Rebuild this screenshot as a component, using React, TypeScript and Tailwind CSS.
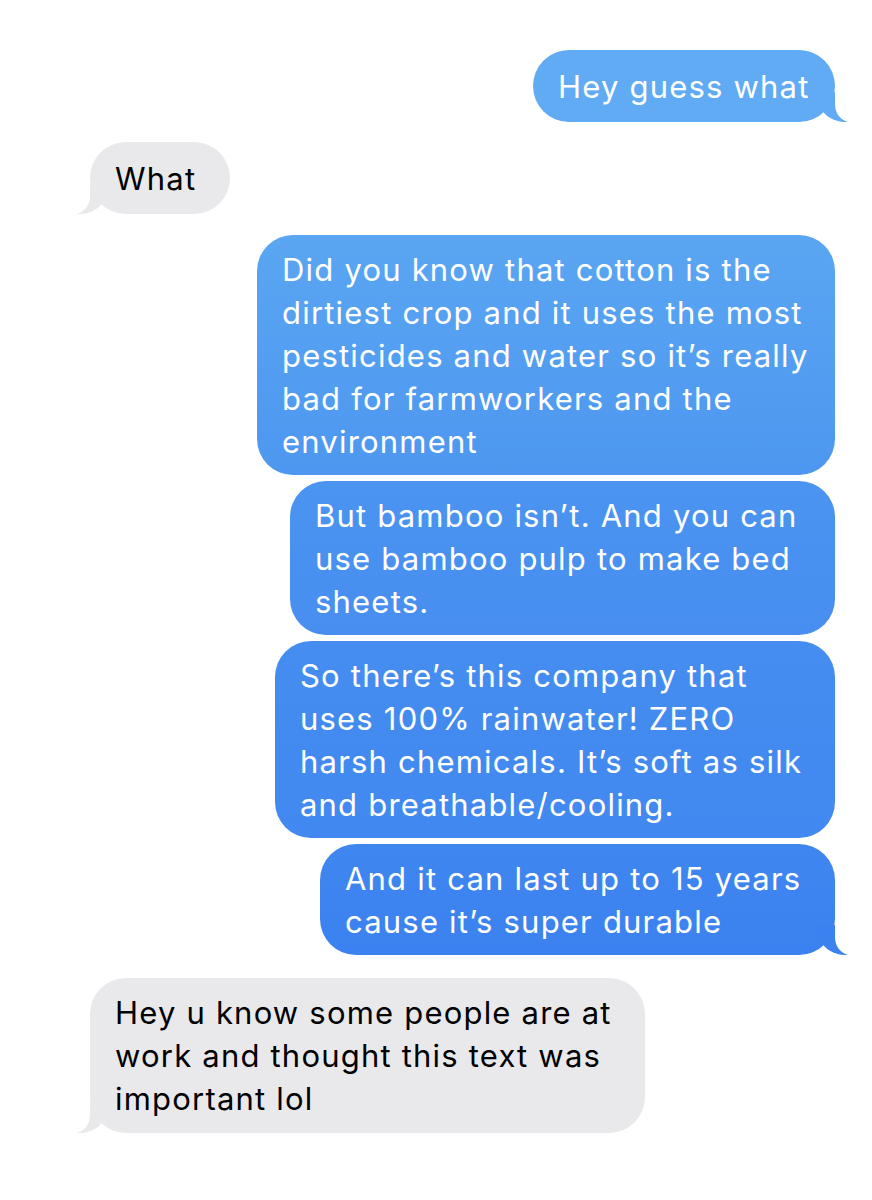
import React from 'react';

type Msg = {
  from: 'me' | 'them';
  lines: string[];
  w: string;
  h: string;
  mt: string;
  bg: string;
  tail?: boolean;
  tailColor?: string;
};

const messages: Msg[] = [
  { from: 'me', lines: ['Hey guess what'], w: 'w-[302px]', h: 'h-[72px]', mt: 'mt-[50px]', bg: 'bg-[#60abf3]', tail: true, tailColor: '#60abf3' },
  { from: 'them', lines: ['What'], w: 'w-[140px]', h: 'h-[72px]', mt: 'mt-[20px]', bg: 'bg-[#e9e9eb]', tail: true, tailColor: '#e9e9eb' },
  {
    from: 'me',
    lines: [
      'Did you know that cotton is the',
      'dirtiest crop and it uses the most',
      'pesticides and water so it\u2019s really',
      'bad for farmworkers and the',
      'environment',
    ],
    w: 'w-[578px]',
    h: 'h-[240px]',
    mt: 'mt-[21px]',
    bg: 'bg-gradient-to-b from-[#5aa6f2] to-[#4d97f0]',
  },
  {
    from: 'me',
    lines: ['But bamboo isn\u2019t. And you can', 'use bamboo pulp to make bed', 'sheets.'],
    w: 'w-[545px]',
    h: 'h-[154px]',
    mt: 'mt-[6px]',
    bg: 'bg-gradient-to-b from-[#4b94f0] to-[#478ef0]',
  },
  {
    from: 'me',
    lines: [
      'So there\u2019s this company that',
      'uses 100% rainwater! ZERO',
      'harsh chemicals. It\u2019s soft as silk',
      'and breathable/cooling.',
    ],
    w: 'w-[560px]',
    h: 'h-[197px]',
    mt: 'mt-[6px]',
    bg: 'bg-gradient-to-b from-[#468df0] to-[#4188f0]',
  },
  {
    from: 'me',
    lines: ['And it can last up to 15 years', 'cause it\u2019s super durable'],
    w: 'w-[515px]',
    h: 'h-[111px]',
    mt: 'mt-[6px]',
    bg: 'bg-gradient-to-b from-[#3f86f0] to-[#3b82f0]',
    tail: true,
    tailColor: '#3b82f0',
  },
  {
    from: 'them',
    lines: ['Hey u know some people are at', 'work and thought this text was', 'important lol'],
    w: 'w-[555px]',
    h: 'h-[155px]',
    mt: 'mt-[23px]',
    bg: 'bg-[#e9e9eb]',
    tail: true,
    tailColor: '#e9e9eb',
  },
];

const Tail: React.FC<{ side: 'left' | 'right'; color: string }> = ({ side, color }) => (
  <svg
    viewBox="0 0 35 30"
    className={`absolute bottom-0 w-[35px] h-[30px] ${side === 'right' ? 'right-[-15px]' : 'left-[-15px] -scale-x-100'}`}
  >
    <path d="M20 0 L20 12 C20 22 26 28 33 30 C25 30.5 16 28 10 22 L0 10 L0 0 Z" fill={color} />
  </svg>
);

const Bubble: React.FC<{ m: Msg }> = ({ m }) => {
  const mine = m.from === 'me';
  return (
    <div
      className={`relative ${m.w} ${m.h} ${m.mt} ${m.bg} ${
        mine ? 'self-end text-white' : 'self-start text-black'
      } rounded-[36px] flex flex-col justify-center px-[25px]`}
    >
      {m.tail && m.tailColor && <Tail side={mine ? 'right' : 'left'} color={m.tailColor} />}
      <div className="relative text-[31px] leading-[43px] tracking-[1.2px] whitespace-nowrap">
        {m.lines.map((l, i) => (
          <div key={i}>{l}</div>
        ))}
      </div>
    </div>
  );
};

const App: React.FC = () => {
  return (
    <div
      className="w-[872px] h-[1200px] bg-white flex flex-col pl-[90px] pr-[37px] overflow-hidden"
      style={{ fontFamily: 'Inter, "Liberation Sans", sans-serif' }}
    >
      {messages.map((m, i) => (
        <Bubble key={i} m={m} />
      ))}
    </div>
  );
};

export default App;
